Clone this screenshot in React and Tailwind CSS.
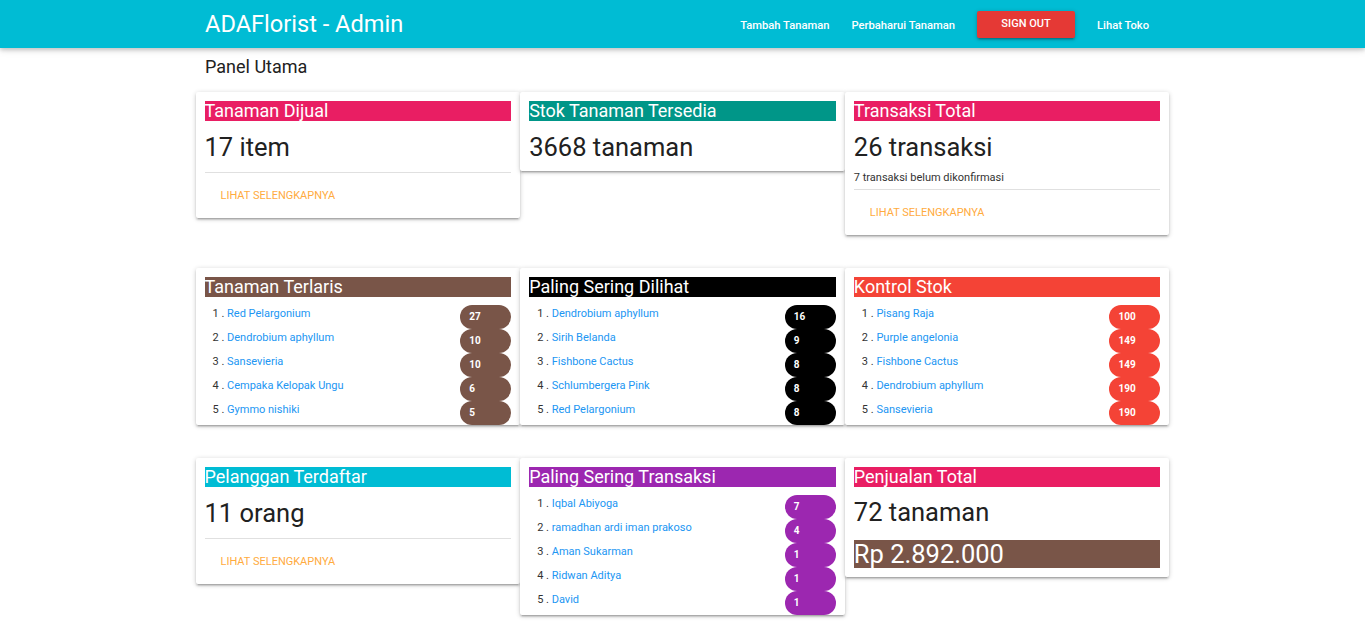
import React from "react";

const shadow =
  "shadow-[0_2px_2px_0_rgba(0,0,0,0.14),0_3px_1px_-2px_rgba(0,0,0,0.12),0_1px_5px_0_rgba(0,0,0,0.2)]";

function Card({ children }) {
  return (
    <div className={`bg-white rounded-[2px] pl-[9px] pr-[9px] pt-[9px] ${shadow}`}>
      {children}
    </div>
  );
}

function Title({ bg, children }) {
  return (
    <div className={`${bg} h-[20px] text-white text-[18px] leading-[20px] whitespace-nowrap overflow-hidden`}>
      {children}
    </div>
  );
}

function Value({ children, className = "" }) {
  return (
    <div className={`h-[32px] leading-[31px] text-[25.5px] text-[#212121] whitespace-nowrap ${className}`}>
      {children}
    </div>
  );
}

function Action() {
  return (
    <div className="border-t border-[#e0e0e0] pt-[17px] pb-[16px] pl-[16px]">
      <a className="text-[11px] leading-[12px] block uppercase text-[#ffab40]">Lihat Selengkapnya</a>
    </div>
  );
}

function List({ items, badge }) {
  return (
    <div className="mt-[8px]">
      {items.map(([name, n], i) => (
        <div key={i} className="flex h-[24px] items-start">
          <div className="pl-[8px] pt-[1px] text-[11px] leading-[16px] text-[#333] whitespace-nowrap">
            {i + 1} . <a className="text-[#2196f3]">{name}</a>
          </div>
          <div
            className={`ml-auto w-[51px] h-[24px] rounded-full ${badge} text-white text-[10px] font-bold leading-[24px] pl-[9px]`}
          >
            {n}
          </div>
        </div>
      ))}
    </div>
  );
}

export default function App() {
  return (
    <div className="font-[Roboto,sans-serif] bg-white min-h-screen">
      <nav className="h-[48px] bg-[#00bcd4] shadow-[0_2px_4px_0_rgba(0,0,0,0.16),0_2px_8px_0_rgba(0,0,0,0.12)] relative z-10">
        <div className="w-[955px] mx-auto h-full flex items-center justify-between">
          <div className="text-white text-[23.6px] leading-[48px]">ADAFlorist - Admin</div>
          <ul className="flex items-center">
            <li>
              <a className="px-[11px] text-white text-[11.2px] font-medium">Tambah Tanaman</a>
            </li>
            <li>
              <a className="px-[11px] text-white text-[11.2px] font-medium">Perbaharui Tanaman</a>
            </li>
            <li>
              <button className="mx-[11px] w-[98px] h-[27px] bg-[#e53935] rounded-[2px] text-white text-[11px] font-medium uppercase shadow-[0_2px_2px_0_rgba(0,0,0,0.14),0_3px_1px_-2px_rgba(0,0,0,0.12),0_1px_5px_0_rgba(0,0,0,0.2)]">
                Sign Out
              </button>
            </li>
            <li>
              <a className="px-[11px] text-white text-[11.2px] font-medium">Lihat Toko</a>
            </li>
          </ul>
        </div>
      </nav>

      <div className="w-[955px] mx-auto mt-[7px] text-[18px] leading-[24px] text-[#212121]">Panel Utama</div>

      <div className="w-[974px] mx-auto mt-[13px] grid grid-cols-3 items-start gap-y-[33px] pb-[30px]">
        <Card>
          <Title bg="bg-[#e91e63]">Tanaman Dijual</Title>
          <Value className="mt-[11px] mb-[8px]">17 item</Value>
          <Action />
        </Card>
        <Card>
          <Title bg="bg-[#009688]">Stok Tanaman Tersedia</Title>
          <Value className="mt-[11px] mb-[7px]">3668 tanaman</Value>
        </Card>
        <Card>
          <Title bg="bg-[#e91e63]">Transaksi Total</Title>
          <Value className="mt-[11px]">26 transaksi</Value>
          <div className="mt-[8px] mb-[5px] text-[11px] leading-[12px] text-[#333]">
            7 transaksi belum dikonfirmasi
          </div>
          <Action />
        </Card>

        <Card>
          <Title bg="bg-[#795548]">Tanaman Terlaris</Title>
          <List
            badge="bg-[#795548]"
            items={[
              ["Red Pelargonium", 27],
              ["Dendrobium aphyllum", 10],
              ["Sansevieria", 10],
              ["Cempaka Kelopak Ungu", 6],
              ["Gymmo nishiki", 5],
            ]}
          />
        </Card>
        <Card>
          <Title bg="bg-black">Paling Sering Dilihat</Title>
          <List
            badge="bg-black"
            items={[
              ["Dendrobium aphyllum", 16],
              ["Sirih Belanda", 9],
              ["Fishbone Cactus", 8],
              ["Schlumbergera Pink", 8],
              ["Red Pelargonium", 8],
            ]}
          />
        </Card>
        <Card>
          <Title bg="bg-[#f44336]">Kontrol Stok</Title>
          <List
            badge="bg-[#f44336]"
            items={[
              ["Pisang Raja", 100],
              ["Purple angelonia", 149],
              ["Fishbone Cactus", 149],
              ["Dendrobium aphyllum", 190],
              ["Sansevieria", 190],
            ]}
          />
        </Card>

        <Card>
          <Title bg="bg-[#00bcd4]">Pelanggan Terdaftar</Title>
          <Value className="mt-[11px] mb-[8px]">11 orang</Value>
          <Action />
        </Card>
        <Card>
          <Title bg="bg-[#9c27b0]">Paling Sering Transaksi</Title>
          <List
            badge="bg-[#9c27b0]"
            items={[
              ["Iqbal Abiyoga", 7],
              ["ramadhan ardi iman prakoso", 4],
              ["Aman Sukarman", 1],
              ["Ridwan Aditya", 1],
              ["David", 1],
            ]}
          />
        </Card>
        <Card>
          <Title bg="bg-[#e91e63]">Penjualan Total</Title>
          <Value className="mt-[10px]">72 tanaman</Value>
          <div className="mt-[11px] mb-[9px] h-[28px] leading-[28px] bg-[#795548] text-white text-[25.5px] whitespace-nowrap">
            Rp 2.892.000
          </div>
        </Card>
      </div>
    </div>
  );
}
